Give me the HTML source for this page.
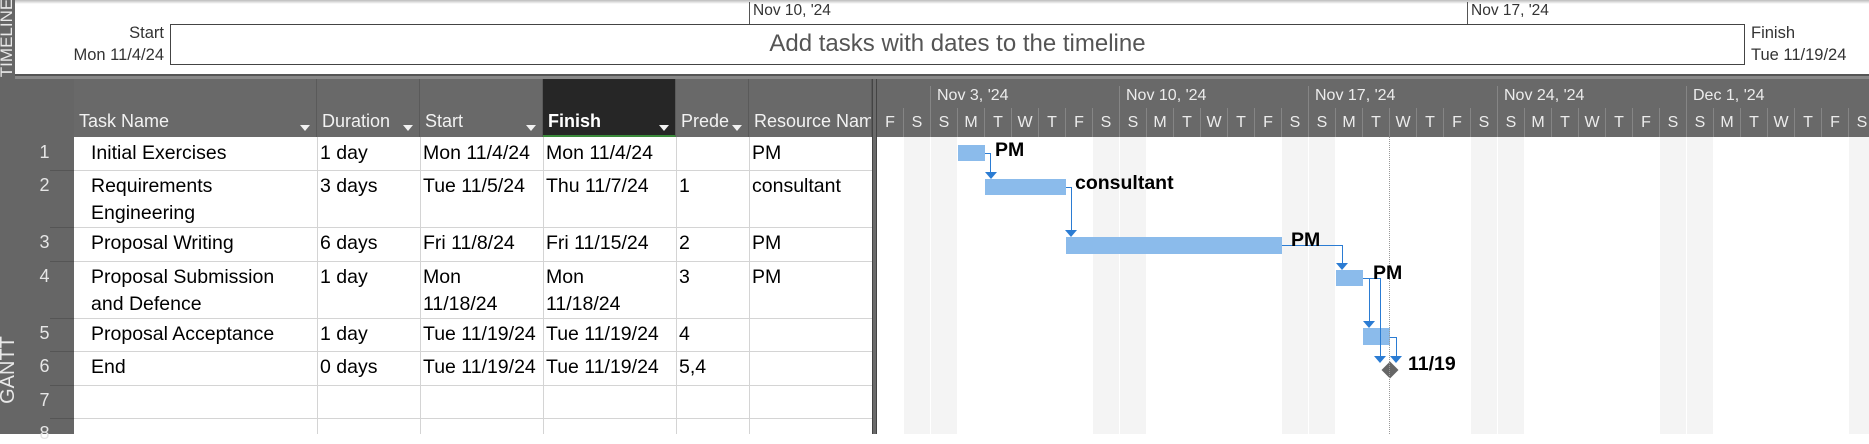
<!DOCTYPE html>
<html><head><meta charset="utf-8"><style>
*{margin:0;padding:0;box-sizing:border-box}
body{width:1869px;height:434px;overflow:hidden;background:#fff;font-family:"Liberation Sans",sans-serif;position:relative}
.a{position:absolute}
.hd{position:absolute;top:79px;height:58px;background:#696969;color:#f2f2f2;font-size:18px;border-right:1px solid #5a5a5a;overflow:hidden}
.hd span{position:absolute;left:5px;top:32px;white-space:nowrap}
.hd i{position:absolute;right:6px;top:46px;width:0;height:0;border-left:5px solid transparent;border-right:5px solid transparent;border-top:6px solid #f2f2f2}
.c{position:absolute;font-size:19.5px;color:#000;line-height:23px;white-space:nowrap;overflow:hidden}
.hl{position:absolute;left:74px;width:798px;height:1px;background:#d4d4d4}
.vl{position:absolute;top:137px;height:297px;width:1px;background:#d4d4d4}
.rn{position:absolute;left:15px;width:59px;color:#e6e6e6;font-size:18px;text-align:center}
.rs{position:absolute;left:50px;width:24px;height:1px;background:#555}
.we{position:absolute;top:137px;height:297px;width:26px;background:#f4f4f4}
.dl{position:absolute;top:108px;width:27px;height:29px;color:#ececec;font-size:16px;text-align:center;line-height:29px;border-right:1px solid #858585}
.ml{position:absolute;top:87px;color:#ececec;font-size:16px}
.ms{position:absolute;top:86px;height:51px;width:1px;background:#858585}
.bar{position:absolute;background:#8bbbeb}
.lk{position:absolute;background:#2b7cd3}
.ar{position:absolute;width:0;height:0;border-left:6px solid transparent;border-right:6px solid transparent;border-top:7px solid #2b7cd3}
.bl{position:absolute;font-weight:bold;font-size:19.5px;color:#000}
</style></head><body>
<!-- left strip -->
<div class="a" style="left:0;top:0;width:15px;height:434px;background:#666;overflow:hidden">
<div class="a" style="left:-38px;top:28px;width:90px;height:20px;transform:rotate(-90deg);color:#e8e8e8;font-size:17px;text-align:center;line-height:20px">TIMELINE</div>
<div class="a" style="left:-62px;top:360px;width:140px;height:20px;transform:rotate(-90deg);color:#e8e8e8;font-size:20px;text-align:center;line-height:20px">GANTT CHART</div>
</div>
<!-- timeline -->
<div class="a" style="left:15px;top:0;width:1854px;height:4px;background:linear-gradient(#bbb,#fff)"></div>
<div class="a" style="left:749px;top:2px;width:1px;height:22px;background:#555"></div>
<div class="a" style="left:753px;top:2px;font-size:15.5px;color:#333">Nov 10, '24</div>
<div class="a" style="left:1467px;top:2px;width:1px;height:22px;background:#555"></div>
<div class="a" style="left:1471px;top:2px;font-size:15.5px;color:#333">Nov 17, '24</div>
<div class="a" style="left:170px;top:24px;width:1575px;height:41px;border:1px solid #444;background:#fff"></div>
<div class="a" style="left:170px;top:30px;width:1575px;text-align:center;font-size:24px;color:#555">Add tasks with dates to the timeline</div>
<div class="a" style="left:20px;top:22px;width:144px;text-align:right;font-size:16.5px;color:#333;line-height:22px">Start<br>Mon 11/4/24</div>
<div class="a" style="left:1751px;top:22px;font-size:16.5px;color:#333;line-height:22px">Finish<br>Tue 11/19/24</div>
<div class="a" style="left:15px;top:74px;width:1854px;height:2px;background:#555"></div>
<div class="a" style="left:15px;top:76px;width:1854px;height:3px;background:#888"></div>
<!-- table header -->
<div class="a" style="left:15px;top:79px;width:59px;height:355px;background:#666"></div>
<div class="hd" style="left:74px;width:243px"><span>Task Name</span><i></i></div>
<div class="hd" style="left:317px;width:103px"><span>Duration</span><i></i></div>
<div class="hd" style="left:420px;width:123px"><span>Start</span><i></i></div>
<div class="hd" style="left:543px;width:133px;background:#262626;border-bottom:2px solid #3a8a3a"><span style="font-weight:bold;color:#fff">Finish</span><i></i></div>
<div class="hd" style="left:676px;width:73px"><span>Prede</span><i></i></div>
<div class="hd" style="left:749px;width:123px"><span>Resource Name</span></div>
<div class="a" style="left:872px;top:79px;width:5px;height:355px;background:#6a6a6a;border-left:1px solid #444;border-right:1px solid #444"></div>
<!-- row lines -->
<div class="hl" style="top:170px"></div><div class="hl" style="top:227px"></div><div class="hl" style="top:261px"></div><div class="hl" style="top:318px"></div><div class="hl" style="top:351px"></div><div class="hl" style="top:385px"></div><div class="hl" style="top:418px"></div>
<div class="rs" style="top:170px"></div><div class="rs" style="top:227px"></div><div class="rs" style="top:261px"></div><div class="rs" style="top:318px"></div><div class="rs" style="top:351px"></div><div class="rs" style="top:385px"></div><div class="rs" style="top:418px"></div>
<div class="vl" style="left:317px"></div><div class="vl" style="left:420px"></div><div class="vl" style="left:543px"></div><div class="vl" style="left:676px"></div><div class="vl" style="left:749px"></div>
<div class="rn" style="top:142px">1</div><div class="rn" style="top:175px">2</div><div class="rn" style="top:232px">3</div><div class="rn" style="top:266px">4</div><div class="rn" style="top:323px">5</div><div class="rn" style="top:356px">6</div><div class="rn" style="top:390px">7</div><div class="rn" style="top:423px">8</div>
<!-- cells -->
<div class="c" style="left:91px;top:142px">Initial Exercises</div>
<div class="c" style="left:91px;top:173px;line-height:27px">Requirements<br>Engineering</div>
<div class="c" style="left:91px;top:232px">Proposal Writing</div>
<div class="c" style="left:91px;top:264px;line-height:27px">Proposal Submission<br>and Defence</div>
<div class="c" style="left:91px;top:323px">Proposal Acceptance</div>
<div class="c" style="left:91px;top:356px">End</div>
<div class="c" style="left:320px;top:142px">1 day</div><div class="c" style="left:320px;top:175px">3 days</div><div class="c" style="left:320px;top:232px">6 days</div><div class="c" style="left:320px;top:266px">1 day</div><div class="c" style="left:320px;top:323px">1 day</div><div class="c" style="left:320px;top:356px">0 days</div>
<div class="c" style="left:423px;top:142px;width:120px">Mon 11/4/24</div><div class="c" style="left:423px;top:175px;width:120px">Tue 11/5/24</div><div class="c" style="left:423px;top:232px;width:120px">Fri 11/8/24</div><div class="c" style="left:423px;top:264px;width:120px;line-height:27px">Mon<br>11/18/24</div><div class="c" style="left:423px;top:323px;width:120px">Tue 11/19/24</div><div class="c" style="left:423px;top:356px;width:120px">Tue 11/19/24</div>
<div class="c" style="left:546px;top:142px">Mon 11/4/24</div><div class="c" style="left:546px;top:175px">Thu 11/7/24</div><div class="c" style="left:546px;top:232px">Fri 11/15/24</div><div class="c" style="left:546px;top:264px;line-height:27px">Mon<br>11/18/24</div><div class="c" style="left:546px;top:323px">Tue 11/19/24</div><div class="c" style="left:546px;top:356px">Tue 11/19/24</div>
<div class="c" style="left:679px;top:175px">1</div><div class="c" style="left:679px;top:232px">2</div><div class="c" style="left:679px;top:266px">3</div><div class="c" style="left:679px;top:323px">4</div><div class="c" style="left:679px;top:356px">5,4</div>
<div class="c" style="left:752px;top:142px">PM</div><div class="c" style="left:752px;top:175px">consultant</div><div class="c" style="left:752px;top:232px">PM</div><div class="c" style="left:752px;top:266px">PM</div>
<!-- gantt header -->
<div class="a" style="left:877px;top:79px;width:992px;height:58px;background:#696969"></div>
<div class="ms" style="left:930px"></div><div class="ms" style="left:1119px"></div><div class="ms" style="left:1308px"></div><div class="ms" style="left:1497px"></div><div class="ms" style="left:1686px"></div>
<div class="ml" style="left:937px">Nov 3, '24</div><div class="ml" style="left:1126px">Nov 10, '24</div><div class="ml" style="left:1315px">Nov 17, '24</div><div class="ml" style="left:1504px">Nov 24, '24</div><div class="ml" style="left:1693px">Dec 1, '24</div>
<div class="dl" style="left:877px">F</div><div class="dl" style="left:904px">S</div><div class="dl" style="left:931px">S</div><div class="dl" style="left:958px">M</div><div class="dl" style="left:985px">T</div><div class="dl" style="left:1012px">W</div><div class="dl" style="left:1039px">T</div><div class="dl" style="left:1066px">F</div><div class="dl" style="left:1093px">S</div><div class="dl" style="left:1120px">S</div><div class="dl" style="left:1147px">M</div><div class="dl" style="left:1174px">T</div><div class="dl" style="left:1201px">W</div><div class="dl" style="left:1228px">T</div><div class="dl" style="left:1255px">F</div><div class="dl" style="left:1282px">S</div><div class="dl" style="left:1309px">S</div><div class="dl" style="left:1336px">M</div><div class="dl" style="left:1363px">T</div><div class="dl" style="left:1390px">W</div><div class="dl" style="left:1417px">T</div><div class="dl" style="left:1444px">F</div><div class="dl" style="left:1471px">S</div><div class="dl" style="left:1498px">S</div><div class="dl" style="left:1525px">M</div><div class="dl" style="left:1552px">T</div><div class="dl" style="left:1579px">W</div><div class="dl" style="left:1606px">T</div><div class="dl" style="left:1633px">F</div><div class="dl" style="left:1660px">S</div><div class="dl" style="left:1687px">S</div><div class="dl" style="left:1714px">M</div><div class="dl" style="left:1741px">T</div><div class="dl" style="left:1768px">W</div><div class="dl" style="left:1795px">T</div><div class="dl" style="left:1822px">F</div><div class="dl" style="left:1849px">S</div>
<!-- weekend shading -->
<div class="we" style="left:904px"></div><div class="we" style="left:931px"></div>
<div class="we" style="left:1093px"></div><div class="we" style="left:1120px"></div>
<div class="we" style="left:1282px"></div><div class="we" style="left:1309px"></div>
<div class="we" style="left:1471px"></div><div class="we" style="left:1498px"></div>
<div class="we" style="left:1660px"></div><div class="we" style="left:1687px"></div>
<div class="we" style="left:1849px"></div>
<!-- bars -->
<div class="bar" style="left:958px;top:145px;width:27px;height:16px"></div>
<div class="bar" style="left:985px;top:179px;width:81px;height:16px"></div>
<div class="bar" style="left:1066px;top:237px;width:216px;height:17px"></div>
<div class="bar" style="left:1336px;top:270px;width:27px;height:16px"></div>
<div class="bar" style="left:1363px;top:328px;width:27px;height:17px"></div>
<!-- links -->
<div class="lk" style="left:985px;top:153px;width:6px;height:1px"></div><div class="lk" style="left:990px;top:153px;width:1px;height:20px"></div><div class="ar" style="left:985px;top:172px"></div>
<div class="lk" style="left:1066px;top:187px;width:6px;height:1px"></div><div class="lk" style="left:1071px;top:187px;width:1px;height:44px"></div><div class="ar" style="left:1065px;top:230px"></div>
<div class="lk" style="left:1282px;top:245px;width:60px;height:1px"></div><div class="lk" style="left:1342px;top:245px;width:1px;height:19px"></div><div class="ar" style="left:1336px;top:263px"></div>
<div class="lk" style="left:1363px;top:278px;width:18px;height:1px"></div><div class="lk" style="left:1369px;top:278px;width:1px;height:44px"></div><div class="ar" style="left:1363px;top:321px"></div>
<div class="lk" style="left:1380px;top:278px;width:1px;height:79px"></div><div class="ar" style="left:1374px;top:356px"></div>
<div class="lk" style="left:1390px;top:337px;width:7px;height:1px"></div><div class="lk" style="left:1396px;top:337px;width:1px;height:20px"></div><div class="ar" style="left:1390px;top:356px"></div>
<div class="a" style="left:1384px;top:364px;width:12px;height:12px;background:#666;transform:rotate(45deg)"></div>
<!-- today line -->
<div class="a" style="left:1389px;top:137px;height:297px;width:0;border-left:1px dotted #999"></div>
<!-- labels -->
<div class="bl" style="left:995px;top:139px">PM</div>
<div class="bl" style="left:1075px;top:172px">consultant</div>
<div class="bl" style="left:1291px;top:229px">PM</div>
<div class="bl" style="left:1373px;top:262px">PM</div>
<div class="bl" style="left:1408px;top:353px">11/19</div>
</body></html>
